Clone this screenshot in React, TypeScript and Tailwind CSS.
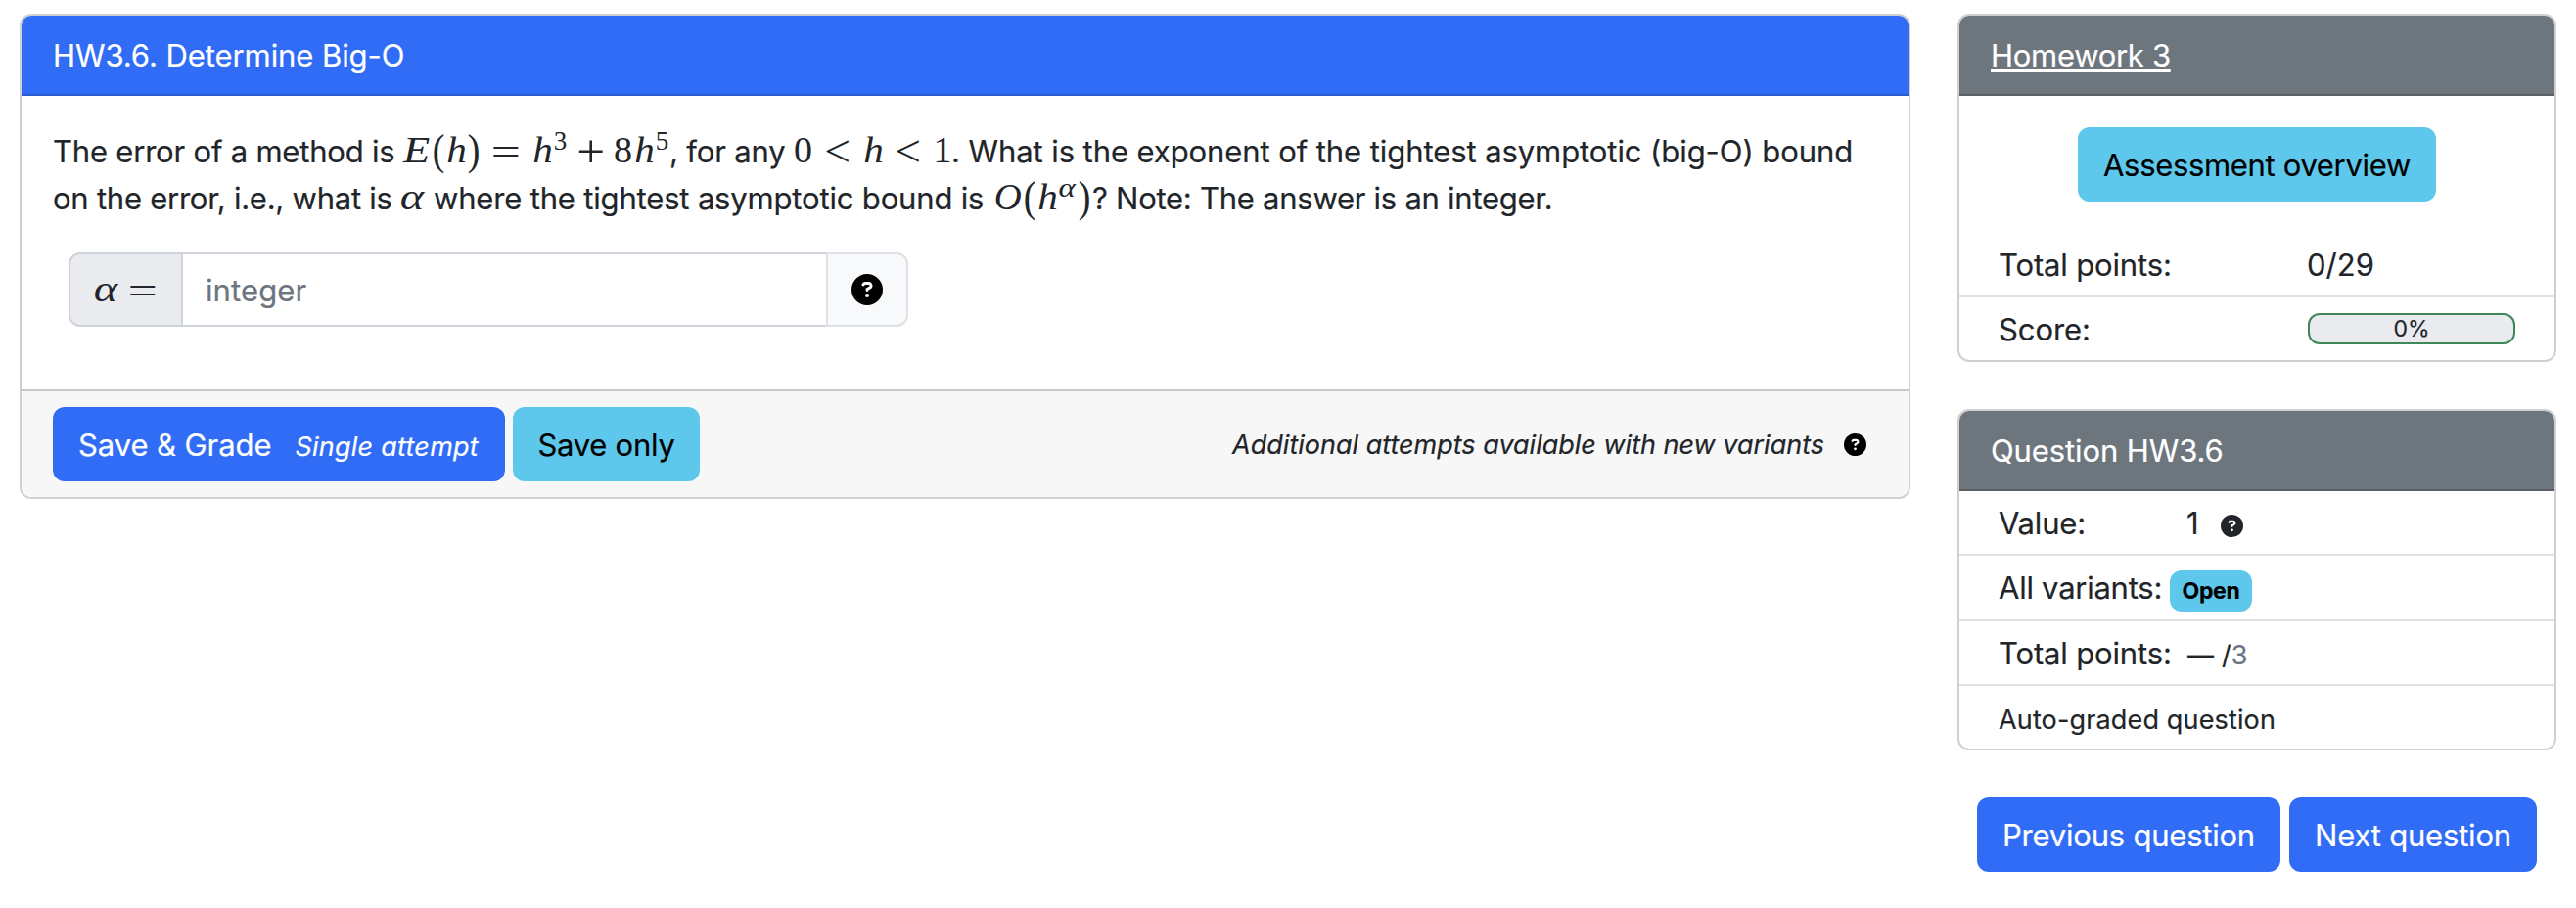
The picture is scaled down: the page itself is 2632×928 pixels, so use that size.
import type { ReactNode } from "react";
import { FaCircleQuestion } from "react-icons/fa6";

function Glyph({ className, shape = "", children }: { className: string; shape?: string; children: ReactNode }) {
  return (
    <span className={`inline-flex justify-center font-['Liberation_Serif',serif] text-[38px] leading-none whitespace-pre [-webkit-text-stroke:0] ${className}`}>
      <span className={`inline-block ${shape}`}>{children}</span>
    </span>
  );
}

function Run({ className, children }: { className: string; children: ReactNode }) {
  return <span className={`inline-block whitespace-pre ${className}`}>{children}</span>;
}

function Question() {
  return (
    <div>
      <div className="flex h-12 items-baseline">
        <Run className="w-[357px] tracking-[-0.2px]">The error of a method is</Run>
        <Glyph className="w-[30px] italic" shape="scale-x-[1.17]">E</Glyph>
        <Glyph className="w-[14px]" shape="scale-y-[1.14]">(</Glyph>
        <Glyph className="w-[23px] italic" shape="scale-x-[1.08]">h</Glyph>
        <Glyph className="w-[12px]" shape="scale-y-[1.14]">)</Glyph>
        <Glyph className="w-[54px]" shape="translate-y-[2px] scale-x-[1.4]">=</Glyph>
        <Glyph className="w-[20px] italic" shape="scale-x-[1.08]">h</Glyph>
        <Glyph className="relative -top-[13px] w-[17px] text-[27px]!">3</Glyph>
        <Glyph className="w-[46px]" shape="translate-y-[1px] scale-x-[1.35] scale-y-[1.3]">+</Glyph>
        <Glyph className="w-[19px]">8</Glyph>
        <Glyph className="w-[25px] italic" shape="scale-x-[1.08]">h</Glyph>
        <Glyph className="relative -top-[13px] w-[11px] text-[27px]!">5</Glyph>
        <Run className="w-[129px] pl-[2px] tracking-[-0.15px]">, for any</Run>
        <Glyph className="w-[19px]">0</Glyph>
        <Glyph className="w-[52px]" shape="translate-y-[1px] scale-x-[1.25] scale-y-[1.2]">&lt;</Glyph>
        <Glyph className="w-[20px] italic" shape="scale-x-[1.08]">h</Glyph>
        <Glyph className="w-[52px]" shape="translate-y-[1px] scale-x-[1.25] scale-y-[1.2]">&lt;</Glyph>
        <Glyph className="w-[18px]">1</Glyph>
        <Run className="tracking-[-0.08px]">. What is the exponent of the tightest asymptotic (big-O) bound</Run>
      </div>
      <div className="flex h-12 items-baseline">
        <Run className="w-[355px] tracking-[-0.24px]">on the error, i.e., what is</Run>
        <Glyph className="w-[24px] italic" shape="scale-x-[1.22]">α</Glyph>
        <Run className="w-[582px] pl-[10px] tracking-[-0.17px]">where the tightest asymptotic bound is</Run>
        <Glyph className="w-[29px] italic" shape="scale-x-[1.02]">O</Glyph>
        <Glyph className="w-[16px]" shape="scale-y-[1.14]">(</Glyph>
        <Glyph className="w-[21px] italic" shape="scale-x-[1.08]">h</Glyph>
        <Glyph className="relative -top-[13px] w-[19px] text-[27px]! italic" shape="scale-x-[1.22]">α</Glyph>
        <Glyph className="w-[16px]" shape="scale-y-[1.14]">)</Glyph>
        <Run className="tracking-[-0.26px]">? Note: The answer is an integer.</Run>
      </div>
    </div>
  );
}

function AnswerInput() {
  return (
    <div className="mt-[31px] ml-4 flex h-[76px] w-[858px]">
      <div className="flex w-[117px] items-baseline rounded-l-[12px] border-2 border-[#ced4da] bg-[#eaebef] pt-4 pl-[23px]">
        <Glyph className="w-[26px] italic" shape="scale-x-[1.22]">α</Glyph>
        <Glyph className="w-[50px]" shape="translate-y-[2px] scale-x-[1.4]">=</Glyph>
      </div>
      <input
        type="text"
        placeholder="integer"
        className="w-0 flex-1 border-y-2 border-[#ced4da] pt-[2px] pl-[23px] tracking-[0.1px] outline-none placeholder:text-[#6c757d]"
      />
      <button className="flex w-[84px] items-center justify-center rounded-r-[12px] border-2 border-[#dee2e6] bg-[#f8f9fb] text-black">
        <FaCircleQuestion className="size-8" />
      </button>
    </div>
  );
}

const card = "overflow-hidden rounded-[12px] border-2 border-[#d0d0d0] bg-white";
const cardHeader = "h-[82px] border-b-2 px-8 pt-[17px] text-white";
const button = "h-[76px] rounded-[12px] pt-[2px]";

export default function App() {
  return (
    <div className="flex items-start bg-white px-5 pt-[14px] font-['Inter',sans-serif] text-[31px] leading-[48px] text-[#212529] [-webkit-text-stroke:0.2px]">
      <main className={`${card} w-[1932px]`}>
        <header className={`${cardHeader} border-[#2a5bca] bg-[#306cf6] tracking-[-0.08px]`}>HW3.6. Determine Big-O</header>
        <div className="h-[300px] px-8 pt-[33px]">
          <Question />
          <AnswerInput />
        </div>
        <footer className="flex h-[110px] items-center border-t-2 border-[#c8c8c8] bg-[#f7f7f7] px-8">
          <button className="flex h-[76px] w-[462px] items-baseline rounded-[12px] bg-[#306cf6] pt-[15px] pl-[26px] tracking-[-0.08px] text-white">
            Save &amp; Grade
            <span className="ml-[24px] text-[27px] tracking-[0.25px] italic">Single attempt</span>
          </button>
          <button className={`${button} ml-2 w-[191px] bg-[#5ec8ec] tracking-[-0.25px] text-black`}>Save only</button>
          <span className="ml-auto pt-px text-[27px] italic">Additional attempts available with new variants</span>
          <FaCircleQuestion className="mr-[11px] ml-5 size-[23px] text-black" />
        </footer>
      </main>

      <aside className="ml-12 w-[612px]">
        <section className={card}>
          <header className={`${cardHeader} border-[#5b6067] bg-[#6d757d]`}>
            <a className="tracking-[-0.29px] underline decoration-[3px] underline-offset-[3px]">Homework 3</a>
          </header>
          <div className="flex justify-center py-8">
            <button className={`${button} w-[366px] bg-[#5ec8ec] tracking-[-0.33px] text-black`}>Assessment overview</button>
          </div>
          <div className="flex h-[66px] border-b-2 border-[#dee2e6] pt-[9px] pl-10">
            <span className="w-[315px] tracking-[-0.15px]">Total points:</span>
            <span>0/29</span>
          </div>
          <div className="flex h-16 items-center pl-10">
            <span className="w-[316px] pt-[2px] tracking-[-0.1px]">Score:</span>
            <span className="flex h-8 w-[212px] items-center justify-center rounded-[12px] border-2 border-[#3f8659] bg-[#e9ebef] text-[23px]">0%</span>
          </div>
        </section>

        <section className={`${card} mt-12`}>
          <header className={`${cardHeader} border-[#5b6067] bg-[#6d757d] tracking-[-0.1px]`}>Question HW3.6</header>
          <div className="flex h-[66px] border-b-2 border-[#dee2e6] pt-[9px] pl-10">
            <span className="w-[192px] tracking-[-0.2px]">Value:</span>
            <span>1</span>
            <FaCircleQuestion className="mt-[15px] ml-[22px] size-[23px]" />
          </div>
          <div className="flex h-[67px] border-b-2 border-[#dee2e6] pt-[9px] pl-10">
            <span className="w-[175px] tracking-[-0.25px]">All variants:</span>
            <span className="mt-[6px] flex h-[42px] w-[84px] items-center justify-center rounded-[12px] bg-[#5ec8ec] text-[23px] leading-none font-bold tracking-[-0.3px] text-black">Open</span>
          </div>
          <div className="flex h-[66px] items-baseline border-b-2 border-[#dee2e6] pt-[9px] pl-10">
            <span className="w-[193px] tracking-[-0.15px]">Total points:</span>
            <span className="flex text-[27px]">
              <span className="w-[35px]">—</span>
              <span>/</span>
              <span className="text-[#6c757d]">3</span>
            </span>
          </div>
          <div className="h-16 pt-[11px] pl-10 text-[27px] tracking-[0.15px]">Auto-graded question</div>
        </section>

        <nav className="mt-12 flex justify-center gap-[9px] text-white">
          <button className={`${button} w-[310px] bg-[#306cf6] tracking-[-0.22px]`}>Previous question</button>
          <button className={`${button} w-[253px] bg-[#306cf6] tracking-[-0.2px]`}>Next question</button>
        </nav>
      </aside>
    </div>
  );
}
